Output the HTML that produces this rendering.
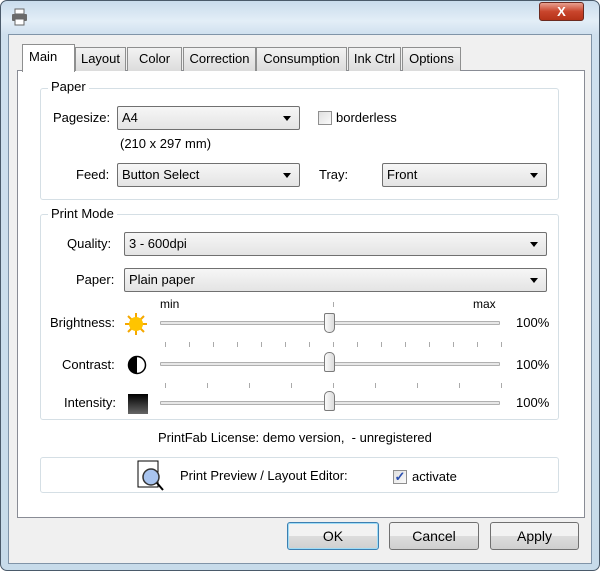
<!DOCTYPE html>
<html><head><style>
*{box-sizing:border-box}
body{margin:0;width:600px;height:571px;overflow:hidden;background:#fff;font-family:"Liberation Sans",sans-serif;font-size:13px;color:#000;position:relative}
.a{position:absolute}
.frame{left:0;top:0;width:600px;height:571px;border:1px solid #4a5a6a;border-radius:7px;background:linear-gradient(180deg,#c9dcec 0,#e3eef7 20px,#cfe0ee 34px,#c7dbea 100%)}
.dlg{left:8px;top:34px;width:584px;height:530px;background:#f0f0f0;border:1px solid #8094a8}
.tab{top:47px;height:24px;border:1px solid #8e8f8f;border-bottom:none;background:linear-gradient(#f3f3f3,#dcdcdc);text-align:center;line-height:22px;font-size:13px}
.panel{left:17px;top:70px;width:568px;height:448px;background:#fff;border:1px solid #898c95}
.grp{border:1px solid #d5dfe5;border-radius:3px}
.lbl{background:#fff;padding:0 3px}
.sel{height:24px;border:1px solid #707070;border-radius:2px;background:linear-gradient(#f6f6f6,#e4e4e4);padding-left:4px;line-height:22px}
.sel:after{content:"";position:absolute;right:8px;top:9px;border-left:4px solid transparent;border-right:4px solid transparent;border-top:5px solid #000}
.trk{height:4px;border:1px solid #b0b0b0;background:#e7e7e7;border-radius:1px}
.thumb{width:11px;height:20px;border:1px solid #7a7a7a;border-radius:2px 2px 5px 5px;background:linear-gradient(90deg,#fafafa,#dcdcdc)}
.btn{top:522px;height:28px;border:1px solid #707070;border-radius:3px;background:linear-gradient(#f2f2f2 50%,#dddddd 50%,#cfcfcf);text-align:center;line-height:26px;font-size:14px}
.chk{width:14px;height:14px;border:1px solid #8f8f8f;background:linear-gradient(135deg,#e0e0e0,#fafafa)}
.tick{height:5px;border-left:1px solid #aaa}
</style></head><body>
<div class="a frame"></div>
<svg class="a" style="left:10px;top:8px" width="20" height="18" viewBox="0 0 20 18"><rect x="5" y="1" width="9" height="5" fill="#fff" stroke="#666"/><rect x="2" y="6" width="15" height="7" rx="1" fill="#6a6a6a"/><rect x="5" y="11" width="9" height="6" fill="#fff" stroke="#666"/></svg>
<div class="a" style="left:539px;top:2px;width:45px;height:19px;border:1px solid #6b2a20;border-radius:3px;background:linear-gradient(#e8a08f,#c9452c 50%,#b53218);color:#fff;text-align:center;font-weight:bold;font-size:13px;line-height:17px">X</div>
<div class="a dlg"></div>
<div class="a panel"></div>
<div class="a tab" style="left:75px;width:51px">Layout</div>
<div class="a tab" style="left:127px;width:55px">Color</div>
<div class="a tab" style="left:183px;width:73px">Correction</div>
<div class="a tab" style="left:256px;width:91px">Consumption</div>
<div class="a tab" style="left:348px;width:53px">Ink Ctrl</div>
<div class="a tab" style="left:402px;width:59px">Options</div>
<div class="a" style="left:22px;top:44px;width:53px;height:28px;border:1px solid #8e8f8f;border-bottom:none;background:#fff;line-height:24px;padding-left:6px">Main</div>

<div class="a grp" style="left:40px;top:88px;width:519px;height:112px"></div>
<div class="a lbl" style="left:48px;top:79px">Paper</div>
<div class="a" style="left:53px;top:110px">Pagesize:</div>
<div class="a sel" style="left:117px;top:106px;width:183px">A4</div>
<div class="a chk" style="left:318px;top:111px"></div>
<div class="a" style="left:336px;top:110px">borderless</div>
<div class="a" style="left:120px;top:136px">(210 x 297 mm)</div>
<div class="a" style="left:76px;top:167px">Feed:</div>
<div class="a sel" style="left:117px;top:163px;width:183px">Button Select</div>
<div class="a" style="left:319px;top:167px">Tray:</div>
<div class="a sel" style="left:382px;top:163px;width:165px">Front</div>

<div class="a grp" style="left:40px;top:214px;width:519px;height:206px"></div>
<div class="a lbl" style="left:48px;top:206px">Print Mode</div>
<div class="a" style="left:67px;top:236px">Quality:</div>
<div class="a sel" style="left:124px;top:232px;width:423px">3 - 600dpi</div>
<div class="a" style="left:76px;top:272px">Paper:</div>
<div class="a sel" style="left:124px;top:268px;width:423px">Plain paper</div>
<div class="a" style="left:160px;top:297px;font-size:12px">min</div>
<div class="a" style="left:473px;top:297px;font-size:12px">max</div>
<div class="a tick" style="left:333px;top:302px"></div>

<div class="a" style="left:50px;top:315px">Brightness:</div>
<svg class="a" style="left:124px;top:312px" width="24" height="24" viewBox="0 0 24 24"><g stroke="#f5a800" stroke-width="2"><line x1="12" y1="1" x2="12" y2="23"/><line x1="1" y1="12" x2="23" y2="12"/><line x1="4" y1="4" x2="20" y2="20"/><line x1="20" y1="4" x2="4" y2="20"/></g><circle cx="12" cy="12" r="7" fill="#ffc400"/></svg>
<div class="a trk" style="left:160px;top:321px;width:340px"></div>
<div class="a thumb" style="left:324px;top:313px"></div>
<div class="a" style="left:516px;top:315px">100%</div>

<div class="a" style="left:62px;top:357px">Contrast:</div>
<svg class="a" style="left:127px;top:355px" width="20" height="20"><circle cx="10" cy="10" r="8.5" fill="#fff" stroke="#000" stroke-width="1.5"/><path d="M10 1.5A8.5 8.5 0 0 0 10 18.5Z" fill="#000"/></svg>
<div class="a trk" style="left:160px;top:362px;width:340px"></div>
<div class="a thumb" style="left:324px;top:352px;border-radius:5px 5px 2px 2px"></div>
<div class="a" style="left:516px;top:357px">100%</div>

<div class="a" style="left:64px;top:395px">Intensity:</div>
<div class="a" style="left:128px;top:394px;width:20px;height:20px;background:linear-gradient(#000,#666)"></div>
<div class="a trk" style="left:160px;top:401px;width:340px"></div>
<div class="a thumb" style="left:324px;top:391px;border-radius:5px 5px 2px 2px"></div>
<div class="a" style="left:516px;top:395px">100%</div>

<div id="ticks"></div>
<div class="a" style="left:158px;top:430px">PrintFab License: demo version,&nbsp; - unregistered</div>

<div class="a grp" style="left:40px;top:457px;width:519px;height:36px"></div>
<svg class="a" style="left:137px;top:460px" width="30" height="32"><rect x="1" y="1" width="20" height="26" fill="#fff" stroke="#000"/><circle cx="14" cy="17" r="8" fill="#a8c4ef" stroke="#333" stroke-width="1.5"/><line x1="20" y1="23" x2="26" y2="30" stroke="#000" stroke-width="2"/></svg>
<div class="a" style="left:180px;top:468px">Print Preview / Layout Editor:</div>
<div class="a chk" style="left:393px;top:470px;color:#2a4fb0;font-size:13px;line-height:12px;text-align:center;font-weight:bold">✓</div>
<div class="a" style="left:412px;top:469px">activate</div>

<div class="a btn" style="left:287px;top:522px;width:92px;border-color:#3c7fb1;box-shadow:inset 0 0 0 1px #9fdcf6">OK</div>
<div class="a btn" style="left:389px;width:90px">Cancel</div>
<div class="a btn" style="left:490px;width:89px">Apply</div>
<script>
var h='';for(var i=0;i<20;i++){var x=165+i*(333-165)/7;if(x>502)break;h+='<div class="a tick" style="left:'+x+'px;top:342px"></div>';}
for(var i=0;i<20;i++){var x=165+i*(333-165)/4;if(x>502)break;h+='<div class="a tick" style="left:'+x+'px;top:383px"></div>';}
document.getElementById('ticks').innerHTML=h;
</script>
</body></html>
